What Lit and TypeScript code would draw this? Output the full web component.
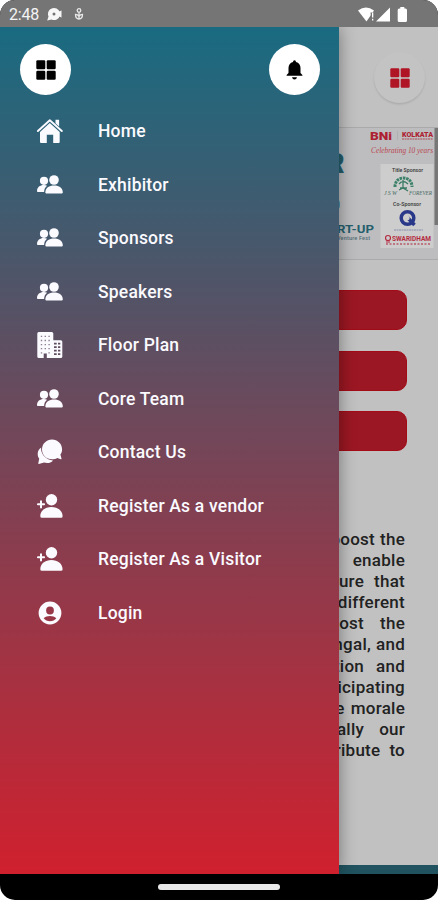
import { LitElement, html, css, svg } from "lit";
import { customElement } from "lit/decorators.js";

const people = svg`<circle cx="7" cy="8.800" r="4.100"/><path d="M0 19.200c0-4 3-6.200 6.800-6.200 1.300 0 2.300.2 3.300.7-1.900 1.400-2.900 3.200-3 6.200H.8q-.8 0-.8-.7z"/><circle cx="17" cy="8" r="4.800"/><path d="M8.300 20.600c0-4.600 3.800-7 8.800-7s8.700 2.400 8.700 7q0 .8-.8.8H9.100q-.8 0-.8-.8z"/>`;
const personAdd = svg`<circle cx="14.500" cy="6.700" r="5.700"/><path d="M3.300 23.200c0-5.600 5-9.200 11.100-9.200s11.200 3.600 11.200 9.200q0 1.600-1.500 1.600H4.800q-1.500 0-1.500-1.600z"/><path d="M4 8.200v6.200M.9 11.300h6.200" stroke="currentColor" stroke-width="2" stroke-linecap="round"/>`;

const icons: Record<string, unknown> = {
  home: svg`<path d="M.9 13 12.800 2.200 24.800 13" fill="none" stroke="currentColor" stroke-width="1.900" stroke-linecap="round" stroke-linejoin="round"/><path d="M18.500 1.800h3.600v6.700l-3.600-3.300z"/><path d="M12.800 5 22.700 13.900v10.200q0 1-1 1h-5.500v-8.300h-6.400v8.300H4q-1 0-1-1V13.900z"/>`,
  people,
  building: svg`<path fill-rule="evenodd" d="M1.800 0h12.900q1.600 0 1.600 1.600V26H9.800v-4.600H6.700V26H1.800Q.3 26 .3 24.400V1.600Q.3 0 1.800 0z"/><path d="M16 8.300h7.800q1.500 0 1.500 1.500v14.700q0 1.500-1.500 1.500H16z"/><path d="M3.800 4.400h1.400m2.400 0H9m2.400 0h1.400M3.800 8.500h1.400m2.400 0H9m2.400 0h1.400M3.800 12.600h1.400m2.400 0H9m2.400 0h1.400M3.800 16.700h1.400m2.400 0H9m2.400 0h1.400M3.800 20.800h1.400m6.200 0h1.400" stroke="#8f7f90" stroke-width="1.300"/><path d="M17 11.600h2.700m1.300 0h2.300M17 15.100h2.700m1.300 0h2.300M17 18.600h2.700m1.300 0h2.300M17 22.100h2.700m1.300 0h2.300" stroke="#604d61" stroke-width="1.900"/>`,
  chat: svg`<path d="M4.200 8.600C3.300 14.500 8.800 20.800 16 21.400c-2.100 2.500-5.700 3.100-9 2.100L1.900 25q-.8.100-.6-.7l.9-4.600C-.5 15.500.6 11 4.200 8.600z"/><path d="M15 .5C9.400.5 5 4.900 5 10.500S9.400 20.300 15 20.300c2 0 3.600-.4 5.200-1.400l3.600 1.400q.9.200.7-.7l-1.100-4c1.100-1.500 1.700-3.200 1.700-5.100C25.100 4.900 20.700.5 15 .5z"/>`,
  personAdd,
  login: svg`<path fill-rule="evenodd" d="M13 1.600a11.400 11.400 0 1 0 0 22.800 11.400 11.400 0 0 0 0-22.800zm0 5a3.900 3.900 0 1 1 0 7.800 3.900 3.900 0 0 1 0-7.800zM6.700 18.300c1.500-1.600 3.800-2.400 6.300-2.400s4.800.8 6.300 2.400C17.900 20.200 15.600 21.300 13 21.300s-4.900-1.100-6.300-3z"/>`,
};

const menu = [
  ["home", "Home"],
  ["people", "Exhibitor"],
  ["people", "Sponsors"],
  ["people", "Speakers"],
  ["building", "Floor Plan"],
  ["people", "Core Team"],
  ["chat", "Contact Us"],
  ["personAdd", "Register As a vendor"],
  ["personAdd", "Register As a Visitor"],
  ["login", "Login"],
];

const lines: [string[], number][] = [
  [["boost", "the"], 5],
  [["enable"], 5],
  [["ensure", "that"], 10],
  [["different"], 5],
  [["boost", "the"], 16],
  [["Bengal,", "and"], 5],
  [["nation", "and"], 12],
  [["participating"], 5],
  [["the", "morale"], 6],
  [["really", "our"], 15],
  [["contribute", "to"], 9],
];

const gridIcon = html`<svg class="grid-icon" viewBox="0 0 20 20" fill="currentColor">
  <rect x=".3" y=".3" width="9" height="9" rx="1.2"/><rect x="10.700" y=".3" width="9" height="9" rx="1.2"/>
  <rect x=".3" y="10.700" width="9" height="9" rx="1.2"/><rect x="10.700" y="10.700" width="9" height="9" rx="1.2"/>
</svg>`;

@customElement("app-root")
export class AppRoot extends LitElement {
  static styles = css`
    :host { display: block; background: #fff; font-family: Roboto, "Liberation Sans", sans-serif; }
    * { box-sizing: border-box; }
    svg { display: block; flex: none; }
    .device { display: flex; flex-direction: column; height: 900px; border-radius: 15px; overflow: hidden; background: #000; }
    .status { display: flex; align-items: center; height: 27px; padding: 2px 30px 0 9px; background: #757575; color: #f4f4f4; font-size: 16px; }
    .time { width: 38px; letter-spacing: -.2px; }
    .notes { margin-right: auto; }
    .stage { position: relative; height: 847px; overflow: hidden; background: #c1c1c1; }
    .page { display: flex; flex-direction: column; align-items: flex-end; height: 100%; }
    .round { display: flex; align-items: center; justify-content: center; width: 51px; height: 51px; border-radius: 50%; }
    .grid-icon { width: 20px; height: 20px; }
    .page-menu { margin: 25px 13px 24px 0; color: #b01525; background: #c3c3c3; box-shadow: 0 1.5px 2px #0000001c; }
    .actions { display: flex; flex-direction: column; gap: 20.300px; margin: 30.400px 31px 0 0; }
    .action { width: 376px; height: 40px; border-radius: 10px; background: #9b1723; border: 1px solid #a30b17; }
    .copy { margin: 78px 33px 0 0; font-size: 17px; font-weight: 500; line-height: 21.1px; letter-spacing: .25px; color: #222; }
    .line { display: flex; justify-content: flex-end; white-space: nowrap; }
    .tab { width: 100%; height: 9px; margin-top: auto; background: #20535f; }
    .drawer { position: absolute; left: 0; top: 0; width: 339px; height: 100%; background: linear-gradient(#196b81, #d0202e); box-shadow: 0 0 16px #0006; color: #fafaff; }
    .head { display: flex; justify-content: space-between; padding: 17px 19px 0 20px; color: #000; }
    .head .round { background: #fff; }
    .list { display: flex; flex-direction: column; padding: 9.500px 0 0 36.500px; }
    .item { display: flex; align-items: center; height: 53.500px; gap: 35.500px; font-size: 17.5px; letter-spacing: .2px; font-weight: 500; white-space: nowrap; }
    .home-bar { display: flex; justify-content: center; padding-top: 10px; }
    .pill { width: 122px; height: 6px; border-radius: 3px; background: #e8e8e8; }
  `;

  render() {
    return html`<div class="device">
      <div class="status">
        <span class="time">2:48</span>
        <svg class="notes" width="40" height="16" viewBox="0 0 40 16" fill="#f7f7f7">
          <path fill-rule="evenodd" d="M7 1a6 6 0 1 1-2.500 11.400L.2 13.500l1.300-4A6 6 0 0 1 7 1zm0 4.600a1.500 1.500 0 1 0 0 3 1.500 1.500 0 0 0 0-3z"/><path d="M11 5 14.500 3.500v7L11 9z"/>
          <g fill="none" stroke="#e8e8e8" stroke-width="1.300"><circle cx="32" cy="3.500" r="1.800"/><path d="M28.500 7.300c0 3 1.600 4.700 3.500 4.700s3.500-1.700 3.500-4.700c-1.700 0-2.800.9-3.500 2-.7-1.100-1.800-2-3.500-2zM32 5.500V12"/></g>
        </svg>
        <svg width="50" height="16" viewBox="0 0 50 16" fill="#fff">
          <path d="M0 3.500Q8-2.500 16 3.500L8.500 14.500z"/><path d="M12.500 5.500h4v10h-3z" fill="#757575"/><path d="M14 5.500h1.300v5H14zm0 6.300h1.300v1.700H14z"/>
          <path d="M32 .5v14H18zM42.300 0h4v1.500h1.200q1.500 0 1.500 1.500v10.500q0 1.500-1.500 1.500h-6.300q-1.500 0-1.500-1.500V3q0-1.500 1.500-1.500h1.100z"/>
        </svg>
      </div>
      <div class="stage">
        <div class="page">
          <div class="round page-menu">${gridIcon}</div>
          <svg width="438" height="133" viewBox="0 127 438 133" font-family="Roboto, sans-serif">
            <path d="M0 127h438v133H0z" fill="#bdbdbf"/><path d="M0 127.500h438M0 259.500h438" stroke="#aaa"/>
            <path d="M434.500 128h3.500v97h-3.500z" fill="#777"/>
            <text x="370" y="139.500" font-size="11.500" font-weight="900" fill="#ad2032" textLength="22" lengthAdjust="spacingAndGlyphs">BNi</text>
            <path d="M397.500 131v9" stroke="#aaa" stroke-width=".7"/>
            <text x="402" y="137" font-size="7" font-weight="900" fill="#ad2032" textLength="31" lengthAdjust="spacingAndGlyphs">KOLKATA</text>
            <path d="M402 139h31" stroke="#b14a57" stroke-width="1.200" stroke-dasharray="2 .6"/>
            <text x="371" y="153" font-size="8" font-style="italic" font-family="Liberation Serif, serif" fill="#b94752" textLength="62" lengthAdjust="spacingAndGlyphs">Celebrating 10 years</text>
            <text x="327" y="173" font-size="27" font-weight="900" fill="#245e6c">R</text>
            <text x="332" y="210" font-size="14" font-weight="700" fill="#28616e">0</text>
            <text x="337" y="232.500" font-size="11.500" font-weight="700" fill="#255f6c" textLength="37" lengthAdjust="spacingAndGlyphs">RT-UP</text>
            <text x="337" y="240" font-size="5.500" font-weight="500" fill="#546f77" textLength="33">Venture Fest</text>
            <path d="M380.500 164h53v84h-53z" fill="#cdcdce"/>
            <text x="392" y="172" font-size="5" font-weight="500" fill="#333" textLength="31" lengthAdjust="spacingAndGlyphs">Title Sponsor</text>
            <path d="M395 187c0-6 4-9 8.500-9s8.500 3 8.500 9" fill="none" stroke="#3c8169" stroke-width="3" stroke-dasharray="2.500 .8"/><path d="M399 184q4-5 9 0M403 180v9m-4 1 4-2 5 3m-8-3 7 0" fill="none" stroke="#397b65" stroke-width="1.300"/>
            <text x="384" y="195" font-size="6" font-style="italic" font-family="Liberation Serif, serif" fill="#486b5f" textLength="13">JSW</text><text x="409" y="195" font-size="5.500" font-style="italic" font-family="Liberation Serif, serif" fill="#486b5f" textLength="23" lengthAdjust="spacingAndGlyphs">FOREVER</text>
            <text x="393" y="206" font-size="5" font-weight="500" fill="#333" textLength="28" lengthAdjust="spacingAndGlyphs">Co-Sponsor</text>
            <circle cx="407.500" cy="218" r="6.300" fill="none" stroke="#293889" stroke-width="3.500"/><path d="m407 217 7.500 8" stroke="#293889" stroke-width="3.500"/><circle cx="407.500" cy="218" r="2.200" fill="#cdcdce"/>
            <path d="M394 230h29" stroke="#7681a5" stroke-width=".8" stroke-dasharray="2 .5"/>
            <circle cx="388" cy="238" r="2.500" fill="none" stroke="#b42b40" stroke-width="1.200"/><path d="M386 242h4" stroke="#b42b40"/>
            <text x="392" y="241" font-size="7" font-weight="700" fill="#b42b40" textLength="39" lengthAdjust="spacingAndGlyphs">SWARIDHAM</text>
            <path d="M386 244h45" stroke="#b55a68" stroke-width="1.500" stroke-dasharray="2 1.500"/>
          </svg>
          <div class="actions"><div class="action"></div><div class="action"></div><div class="action"></div></div>
          <div class="copy">${lines.map(([words, gap]) => html`<div class="line" style="gap:${gap}px">${words.map((w) => html`<span>${w}</span>`)}</div>`)}</div>
          <div class="tab"></div>
        </div>
        <div class="drawer">
          <div class="head">
            <div class="round">${gridIcon}</div>
            <div class="round"><svg width="17" height="20" viewBox="0 0 17 20"><path d="M8.500.2q1.500 0 1.500 1.700c3 .7 4.500 3 4.500 6v5l1.900 2v.9H.6v-.9l1.900-2v-5c0-3 1.500-5.300 4.500-6Q7 .2 8.500.2zM6 17.200h5q-.5 2.200-2.500 2.200T6 17.200z"/></svg></div>
          </div>
          <div class="list">${menu.map(([icon, label]) => html`<div class="item"><svg width="26" height="26" viewBox="0 0 26 26" fill="currentColor">${icons[icon]}</svg><span>${label}</span></div>`)}</div>
        </div>
      </div>
      <div class="home-bar"><div class="pill"></div></div>
    </div>`;
  }
}
